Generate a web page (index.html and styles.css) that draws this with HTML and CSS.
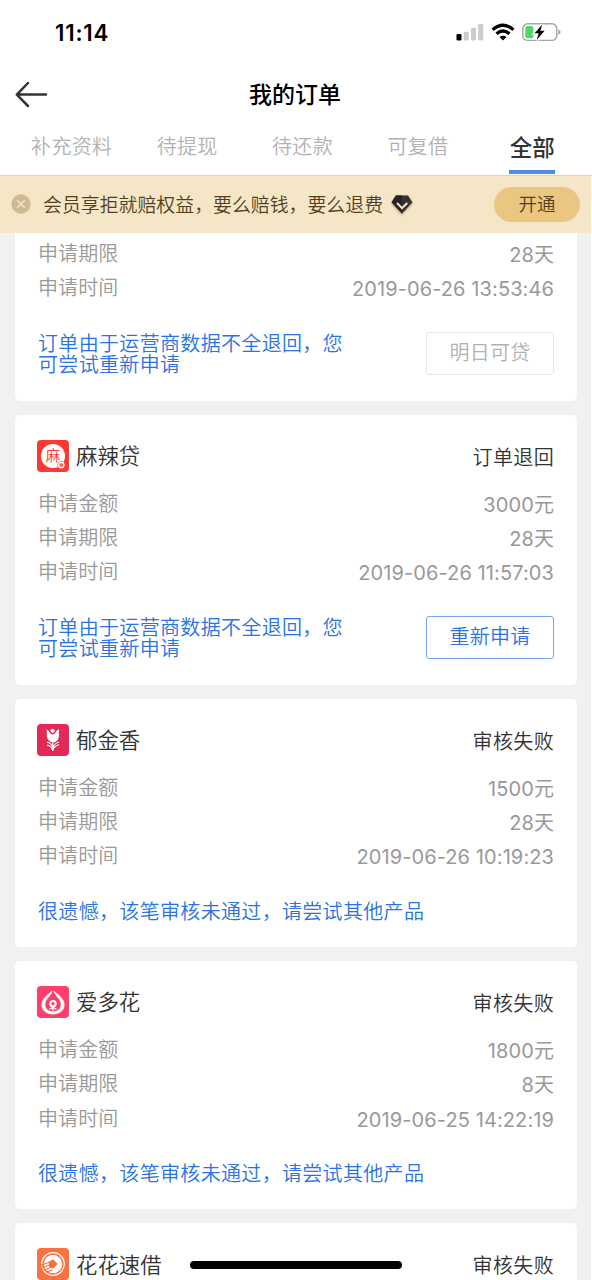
FILE: index.html
```html
<!DOCTYPE html>
<html lang="zh-CN">
<head>
<meta charset="utf-8">
<title>我的订单</title>
<link rel="stylesheet" href="styles.css">
</head>
<body>
<div class="phone">
  <header class="top">
    <div class="status">
      <span class="clock">11:14</span>
      <div class="status-icons">
        <svg width="28" height="18" viewBox="0 0 28 18"><rect x=".5" y="11" width="5" height="6.5" rx="1.3" fill="#000"/><g fill="#ccc"><rect x="7.7" y="8.8" width="5" height="8.7" rx="1.3"/><rect x="15" y="4.8" width="5" height="12.7" rx="1.3"/><rect x="22.2" y="1" width="5" height="16.5" rx="1.3"/></g></svg>
        <svg class="wifi" width="24" height="18" viewBox="0 0 24 18"><g fill="none" stroke="#000" stroke-width="3.2"><path d="M1.6 6.7Q12-2.2 22.4 6.7"/><path d="M5.5 10.8Q12 5.2 18.5 10.8"/></g><path d="M8.5 14.1Q12 11.5 15.5 14.1L12 17.6Z"/></svg>
        <svg class="battery" width="39" height="20" viewBox="0 0 39 20"><rect x=".8" y="1.8" width="34" height="16.6" rx="5" fill="#fff" stroke="#a5a5a5" stroke-width="1.4"/><rect x="3.3" y="4" width="8" height="12.3" rx="2" fill="#4cd964"/><path d="M36.4 7.4Q38.6 8.2 38.6 10.1T36.4 12.8Z" fill="#a5a5a5"/><path d="M20.2 2.5L12.6 11.3H16.6L14.8 18L22.6 8.8H18.4Z" fill="#000" stroke="#fff" stroke-width="3" paint-order="stroke"/></svg>
      </div>
    </div>
    <div class="nav">
      <svg class="back" width="34" height="28" viewBox="0 0 34 28" fill="none" stroke="#333" stroke-width="2.5" stroke-linecap="round" stroke-linejoin="round"><path d="M13 3L1.8 14.6L13 26M1.8 14.6H31"/></svg>
      <h1 class="title">我的订单</h1>
    </div>
    <nav class="tabs">
      <span class="tab">补充资料</span><span class="tab">待提现</span><span class="tab">待还款</span><span class="tab">可复借</span><span class="tab active">全部</span>
    </nav>
  </header>
  <div class="banner">
    <svg width="20" height="20" viewBox="0 0 20 20"><circle cx="10" cy="10" r="9.7" fill="#cfbb91"/><path d="M6.2 6.2L13.8 13.8M13.8 6.2L6.2 13.8" stroke="#f5e6c8" stroke-width="1.4"/></svg>
    <span class="banner-text">会员享拒就赔权益，要么赔钱，要么退费</span>
    <svg class="gem" width="24" height="22" viewBox="0 0 24 22"><path d="M6 1.4H18L22.4 8.2L12 19.6L1.6 8.2Z" fill="#333"/><path d="M6 1.4L1.6 8.2L12 19.6V1.4Z" fill="#242424"/><path d="M7 9L12 14.2L17.3 9" fill="none" stroke="#f7e8cf" stroke-width="2"/></svg>
    <span class="open">开通</span>
  </div>
  <main class="list">
    <section class="card clipped">
      <div class="row"><span>申请期限</span><span class="value">28天</span></div>
      <div class="row"><span>申请时间</span><span class="value">2019-06-26 13:53:46</span></div>
      <div class="foot"><p class="note">订单由于运营商数据不全退回，您可尝试重新申请</p><span class="btn disabled">明日可贷</span></div>
    </section>
    <section class="card">
      <div class="head">
        <svg class="logo" viewBox="0 0 32 32"><rect width="32" height="32" rx="4" fill="#fb3b32"/><circle cx="16" cy="16" r="12" fill="#fff"/><text class="logo-text" x="16" y="21" text-anchor="middle">麻</text><circle cx="24.3" cy="25" r="3.8" fill="#fb3b32"/><circle cx="24.3" cy="25" r="2.6" fill="none" stroke="#fff" stroke-width="1.5"/><circle cx="24.3" cy="25" r=".6" fill="#fff"/></svg>
        <h2 class="name">麻辣贷</h2><span class="state">订单退回</span>
      </div>
      <div class="row"><span>申请金额</span><span class="value">3000元</span></div>
      <div class="row"><span>申请期限</span><span class="value">28天</span></div>
      <div class="row"><span>申请时间</span><span class="value">2019-06-26 11:57:03</span></div>
      <div class="foot"><p class="note">订单由于运营商数据不全退回，您可尝试重新申请</p><span class="btn">重新申请</span></div>
    </section>
    <section class="card">
      <div class="head">
        <svg class="logo" viewBox="0 0 32 32"><rect width="32" height="32" rx="4" fill="#e32955"/><path d="M9.7 5.4Q12.2 6.3 13.1 9.2Q15.5 12 18 9.2Q19.2 6.3 22 5.2L21.9 13Q21 18 15.8 18.4Q10.6 17.8 9.9 12.5Z" fill="#fff"/><circle cx="15.6" cy="6.8" r="2.1" fill="#fff"/><path d="M15.8 18V27M10 18.3Q14.5 19 15.3 23M22 18Q17 19.5 16.2 24M10 21Q14.5 22 15.5 26M22 20.5Q17 22.5 16 26" fill="none" stroke="#fff" stroke-width="1.1"/></svg>
        <h2 class="name">郁金香</h2><span class="state">审核失败</span>
      </div>
      <div class="row"><span>申请金额</span><span class="value">1500元</span></div>
      <div class="row"><span>申请期限</span><span class="value">28天</span></div>
      <div class="row"><span>申请时间</span><span class="value">2019-06-26 10:19:23</span></div>
      <div class="foot"><p class="note wide">很遗憾，该笔审核未通过，请尝试其他产品</p></div>
    </section>
    <section class="card">
      <div class="head">
        <svg class="logo" viewBox="0 0 32 32"><rect width="32" height="32" rx="4" fill="#fc3f6c"/><path d="M15.2 5Q14.7 7.6 10.8 12Q7.6 15.5 8 19.4Q8.8 25.4 16 25.8Q23.2 25.4 24 19.4Q24.4 15.5 21.2 12Q17.3 7.6 16.8 5Q23.3 9.6 26.3 14.5Q29 20.5 24.7 25Q21 28.2 16 28.2Q11 28.2 7.3 25Q3 20.5 5.7 14.5Q8.7 9.6 15.2 5Z" fill="#fff" stroke="#fff" stroke-width=".5"/><circle cx="16" cy="17.8" r="2.7" fill="none" stroke="#fff" stroke-width="2"/><path d="M16 21V25.5M12.5 23.3L16 21.4L19.5 23.3" fill="none" stroke="#fff" stroke-width="1.1"/></svg>
        <h2 class="name">爱多花</h2><span class="state">审核失败</span>
      </div>
      <div class="row"><span>申请金额</span><span class="value">1800元</span></div>
      <div class="row"><span>申请期限</span><span class="value">8天</span></div>
      <div class="row"><span>申请时间</span><span class="value">2019-06-25 14:22:19</span></div>
      <div class="foot"><p class="note wide">很遗憾，该笔审核未通过，请尝试其他产品</p></div>
    </section>
    <section class="card">
      <div class="head">
        <svg class="logo" viewBox="0 0 32 32"><rect width="32" height="32" rx="4" fill="#fa7142"/><circle cx="16" cy="16" r="11.3" fill="none" stroke="#fff" stroke-width="1.2"/><circle cx="16" cy="16" r="9.2" fill="#fff"/><path d="M16 11.2L20.8 16L16 20.8L12 18.5V13.5Z" fill="#fa7142"/><path d="M4 17L13 14.2M5 19.5L13.5 16.8M6.5 22L14.5 19.3M9 24.3L15.5 21.7" stroke="#fa7142" stroke-width="1.2"/></svg>
        <h2 class="name">花花速借</h2><span class="state">审核失败</span>
      </div>
    </section>
  </main>
  <div class="home-bar"></div>
</div>
</body>
</html>
```
FILE: styles.css
```css
* { box-sizing: border-box; }
body { margin: 0; background: #fff; }
.phone {
  position: relative;
  display: flex;
  flex-direction: column;
  width: 592px;
  height: 1280px;
  overflow: hidden;
  font-family: Inter, "Noto Sans CJK SC", sans-serif;
  color: #333;
  white-space: nowrap;
}
svg { display: block; flex: none; }
h1, h2, p { margin: 0; font-weight: 400; }

.top { height: 176px; flex: none; border-bottom: 1.5px solid #d5d5d8; }
.status { display: flex; align-items: center; justify-content: space-between; height: 64px; padding: 0 31px 0 55px; }
.clock { padding-top: 1px; font-size: 22.3px; font-weight: 600; letter-spacing: .8px; color: #000; }
.status-icons { display: flex; align-items: center; }
.wifi { margin-left: 7px; }
.battery { margin-left: 7px; }
.nav { display: grid; grid-template-columns: 60px 1fr 60px; align-items: center; height: 60px; }
.back { margin-left: 15px; }
.title { padding: 2px 2px 0 0; text-align: center; font-size: 23px; line-height: 32px; font-weight: 500; color: #000; }
.tabs { display: grid; grid-template-columns: repeat(5, 1fr); height: 50px; padding: 0 1px 0 14px; }
.tab { text-align: center; font-size: 20px; letter-spacing: .3px; line-height: 46px; height: 50px; font-weight: 350; color: #b2b2b2; }
.active { justify-self: center; position: relative; left: -1px; width: 46px; font-size: 22.5px; letter-spacing: 0; line-height: 47px; font-weight: 500; color: #333; border-bottom: 4px solid #508cee; }

.banner { display: flex; align-items: center; flex: none; width: 591px; height: 57px; padding: 0 11px 0 12px; background: #f5e6c8; }
.banner svg:first-child { margin: -2px 12px 0 -1px; }
.banner-text { padding-top: 2px; font-size: 18.9px; line-height: 30px; color: #533f20; font-weight: 350; }
.gem { margin-left: 7px; filter: drop-shadow(0 1px 1px #9b8764); }
.open { margin-left: auto; width: 86px; height: 35px; border-radius: 18px; background: #eac680; color: #533f20; font-size: 18.5px; line-height: 35px; text-align: center; font-weight: 350; }

.list { display: flex; flex-direction: column; gap: 14.2px; flex: 1; min-height: 0; width: 591px; padding: 0 14px 0 15px; background: #f1f1f1; }
.card { flex: none; padding: 25px 23px 26px 22px; border-radius: 5px; background: #fff; }
.clipped { padding-top: 3px; border-radius: 0 0 5px 5px; }
.head { display: flex; align-items: center; height: 32px; margin-bottom: 14px; }
.logo { width: 32px; height: 32px; }
.logo-text { font-family: "Noto Sans CJK SC", sans-serif; font-size: 14.5px; font-weight: 350; fill: #fb3b32; }
.name { padding-top: 1px; margin-left: 7px; font-size: 21.4px; line-height: 32px; font-weight: 350; }
.state { padding-top: 4px; margin-left: auto; font-size: 20px; letter-spacing: .35px; line-height: 32px; font-weight: 350; }
.row { display: flex; justify-content: space-between; height: 34.3px; padding-left: 1px; font-size: 20px; line-height: 36px; letter-spacing: .1px; color: #999; font-weight: 350; }
.value { padding-top: 1px; font-weight: 395; }
.foot { display: flex; align-items: center; justify-content: space-between; margin-top: 27px; }
.note { width: 312px; padding: 2px 0 0 1px; margin-bottom: -2px; font-size: 20px; line-height: 21px; letter-spacing: .33px; color: #2974e0; white-space: normal; font-weight: 350; }
.wide { width: auto; }
.btn { width: 128px; height: 43px; border: 1.5px solid #75a3ef; border-radius: 3px; text-align: center; font-size: 20px; line-height: 41px; letter-spacing: .3px; color: #2974e0; font-weight: 350; }
.disabled { border-color: #e6e6e6; color: #b2b2b2; }
.home-bar { position: absolute; left: 190px; top: 1261px; width: 212px; height: 8px; border-radius: 4px; background: #000; }
```
